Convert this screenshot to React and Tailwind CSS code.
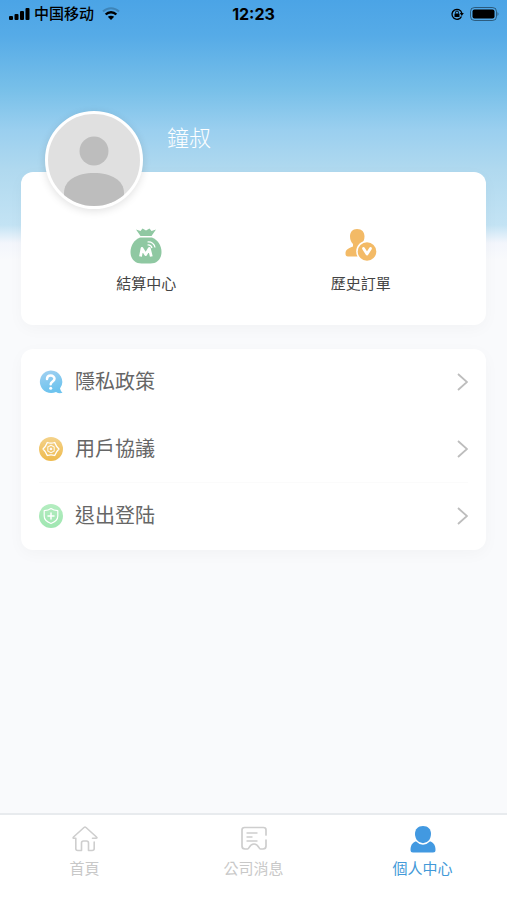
import React from "react";

const BagIcon = () => (
  <svg width="32" height="36" viewBox="0 0 32 36" aria-hidden="true">
    <path d="M6 1.500 L10.500 3 L12.500 0.500 L16 2.500 L19.500 0.500 L21.500 3 L26 1.500 L21.500 8 H10.500 Z" fill="#8fc8a2" />
    <path d="M10 9.500 H22 C27.500 12 31.500 17 31.500 24 C31.500 31.500 26.500 35.500 20.500 35.500 H11.500 C5.500 35.500 0.500 31.500 0.500 24 C0.500 17 4.500 12 10 9.500 Z" fill="#8fc8a2" />
    <path d="M10.500 28.500 L12 20.500 L15.700 26.500 L19.300 20.500 L21.300 28.500" fill="none" stroke="#fff" strokeWidth="2.800" strokeLinejoin="round" />
    <path d="M17.500 17 C19.500 16.700 21.500 18 22 20 M17.500 14 C21.500 13.500 24.500 16 25 19.500" fill="none" stroke="#fff" strokeWidth="1.200" />
  </svg>
);

const OrderIcon = () => (
  <svg width="34" height="36" viewBox="0 0 34 36" aria-hidden="true">
    <path d="M13 1 C18 1 20.500 4 20.500 8.500 C20.500 12 19 14.500 17.500 16 V19 L24 23 V28.500 H4 C2 28.500 1.500 27.500 1.500 25.500 C1.500 22 3.500 20.500 9 18.500 V16 C7.500 14.500 6 12 6 8.500 C6 4 8.500 1 13 1 Z" fill="#f3ba66" />
    <circle cx="23" cy="23.500" r="10.800" fill="#fff" />
    <circle cx="23" cy="23.500" r="9.300" fill="#f3ba66" />
    <path d="M19.500 20.500 L23 26 L26.500 20.500" fill="none" stroke="#fff" strokeWidth="2.800" strokeLinecap="round" strokeLinejoin="round" />
  </svg>
);

const QuestionIcon = () => (
  <svg width="24" height="24" viewBox="0 0 24 24" aria-hidden="true">
    <defs>
      <linearGradient id="blueFill" x1="0" y1="0" x2="0.300" y2="1">
        <stop offset="0" stopColor="#a3d1f1" />
        <stop offset="1" stopColor="#6dc3ee" />
      </linearGradient>
    </defs>
    <path d="M11.500 0.500 A11.300 11.300 0 1 0 17 22 C19 23.300 21 23.500 23.500 22.800 C22 21.500 21.500 20 21 18.500 A11.300 11.300 0 0 0 11.500 0.500 Z" fill="url(#blueFill)" />
    <path d="M8 9 C8 4.500 15.500 4.500 15.500 8.800 C15.500 11.500 11.700 11.500 11.700 14.300" fill="none" stroke="#fff" strokeWidth="2.500" strokeLinecap="round" />
    <circle cx="11.700" cy="18.200" r="1.500" fill="#fff" />
  </svg>
);

const GearIcon = () => (
  <svg width="24" height="24" viewBox="0 0 24 24" aria-hidden="true">
    <defs>
      <linearGradient id="goldFill" x1="0" y1="0" x2="0" y2="1">
        <stop offset="0" stopColor="#f4d28a" />
        <stop offset="1" stopColor="#eeba4d" />
      </linearGradient>
    </defs>
    <circle cx="12" cy="12" r="12" fill="url(#goldFill)" />
    <g fill="none" stroke="#fff" strokeLinejoin="round">
      <path d="M8.300 5.500 Q12 6.700 15.700 5.500 Q17.200 9.500 20 12 Q17.200 14.500 15.700 18.500 Q12 17.300 8.300 18.500 Q6.800 14.500 4 12 Q6.800 9.500 8.300 5.500 Z" strokeWidth="1.300" />
      <path d="M12 8.200 L15.200 10 V14 L12 15.800 L8.800 14 V10 Z" strokeWidth="1.100" opacity="0.850" />
      <circle cx="12" cy="12" r="0.900" fill="#fff" />
    </g>
  </svg>
);

const ShieldIcon = () => (
  <svg width="24" height="24" viewBox="0 0 24 24" aria-hidden="true">
    <defs>
      <linearGradient id="greenFill" x1="0" y1="0" x2="0" y2="1">
        <stop offset="0" stopColor="#b4edc0" />
        <stop offset="1" stopColor="#9fe6b1" />
      </linearGradient>
    </defs>
    <circle cx="12" cy="12" r="12" fill="url(#greenFill)" />
    <g fill="none" stroke="#fff" strokeLinecap="round" strokeLinejoin="round">
      <path d="M12 4.500 C14 6 16 6.500 18.800 6.700 V12 C18.800 15.500 16 18 12 19.500 C8 18 5.200 15.500 5.200 12 V6.700 C8 6.500 10 6 12 4.500 Z" strokeWidth="1.200" />
      <path d="M12 9 V15 M9 12 H15" strokeWidth="1.500" />
    </g>
  </svg>
);

const Chevron = () => (
  <svg width="12" height="20" viewBox="0 0 12 20" fill="none" stroke="#bdbdbd" strokeWidth="1.800" aria-hidden="true">
    <path d="M2 2 L11 10 L2 18" />
  </svg>
);

const HomeIcon = () => (
  <svg width="28" height="28" viewBox="0 0 28 28" fill="none" stroke="#cecece" strokeWidth="1.600" strokeLinecap="round" strokeLinejoin="round" aria-hidden="true">
    <path d="M21.500 13.300 H25 C26.200 13.300 26.200 12.600 25.500 12 L15 2.500 Q14 1.700 13 2.500 L2.500 12 C1.800 12.700 2 13.300 3 13.300 H4.800 V23.500 Q4.800 25.500 6.800 25.500 H10.500 V18 Q10.500 16 12.500 16 H15.500 Q17.500 16 17.500 18 V25.500 H21 Q23.200 25.500 23.200 23.500 V17" />
  </svg>
);

const NewsIcon = () => (
  <svg width="28" height="28" viewBox="0 0 28 28" fill="none" stroke="#cecece" strokeWidth="1.700" strokeLinecap="round" strokeLinejoin="round" aria-hidden="true">
    <path d="M26 10 V5 Q26 2.500 23.500 2.500 H4.500 Q2 2.500 2 5 V21 Q2 24 5 24 H7.500 C9.500 24 9 19 14 19 C19 19 18.500 24 20.500 24 H23 Q26 24 26 21 V15" />
    <path d="M7 8 H17 M7 12 H12 M7 16 H17" strokeWidth="1.400" />
  </svg>
);

const ProfileIcon = () => (
  <svg width="28" height="28" viewBox="0 0 28 28" aria-hidden="true">
    <path d="M7.500 16 L20.500 16 C25 17.500 26.500 21 26.500 25 Q26.500 27.500 24 27.500 H4 Q1.500 27.500 1.500 25 C1.500 21 3 17.500 7.500 16 Z" fill="#4299e1" />
    <path d="M14 1 C19 1 22 4 22 9 C22 14 18.500 18.500 14 18.500 C9.500 18.500 6 14 6 9 C6 4 9 1 14 1 Z" fill="#4299e1" />
    <path d="M7 15.500 Q14 22.500 21 15.500" fill="none" stroke="#fff" strokeWidth="1.300" />
  </svg>
);

const shortcuts = [
  { label: "結算中心", Icon: BagIcon },
  { label: "歷史訂單", Icon: OrderIcon },
];

const menu = [
  { label: "隱私政策", Icon: QuestionIcon, line: "border-transparent" },
  { label: "用戶協議", Icon: GearIcon, line: "border-[#fbfbfb]" },
  { label: "退出登陆", Icon: ShieldIcon, line: "border-transparent" },
];

const tabs = [
  { label: "首頁", Icon: HomeIcon, color: "text-[#c8c8c8]" },
  { label: "公司消息", Icon: NewsIcon, color: "text-[#c8c8c8]" },
  { label: "個人中心", Icon: ProfileIcon, color: "text-[#4299d8]", current: true },
];

function StatusBar() {
  return (
    <div className="grid h-7 grid-cols-3 items-center px-2 text-black">
      <div className="flex items-center gap-1">
        <svg width="22" height="14" viewBox="0 0 22 14" aria-hidden="true">
          <rect x="1" y="9" width="4" height="4" rx="1" />
          <rect x="6.500" y="7" width="4" height="6" rx="1" />
          <rect x="12" y="4" width="4" height="9" rx="1" />
          <rect x="17.500" y="1" width="4" height="12" rx="1" />
        </svg>
        <span className="text-[15px] font-medium leading-5">中国移动</span>
        <svg className="ml-1" width="18" height="14" viewBox="0 0 18 14" fill="none" stroke="#000" aria-hidden="true">
          <path d="M1 4.500 C5.500 0 12.500 0 17 4.500" strokeWidth="2" opacity="0.200" />
          <path d="M3.700 7.500 C6.500 4.500 11.500 4.500 14.300 7.500" strokeWidth="2.400" />
          <path d="M9 13 L5.800 9.800 Q9 7.500 12.200 9.800 Z" fill="#000" stroke="none" />
        </svg>
      </div>
      <time className="text-center font-['Inter','Liberation_Sans',sans-serif] text-base font-bold leading-5">12:23</time>
      <div className="flex items-center justify-end gap-1.5">
        <svg width="14" height="14" viewBox="0 0 14 14" aria-hidden="true">
          <path d="M11.500 9.500 A5 5 0 1 1 11.800 6" fill="none" stroke="#000" strokeWidth="1.300" />
          <path d="M9.800 6 H13.800 L11.800 9 Z" />
          <rect x="4.500" y="6.500" width="5" height="3.500" rx="0.500" />
          <path d="M5.500 6.500 V5.500 Q5.500 4 7 4 Q8.500 4 8.500 5.500 V6.500" fill="none" stroke="#000" />
        </svg>
        <svg width="29" height="14" viewBox="0 0 29 14" aria-hidden="true">
          <rect x="0.500" y="0.500" width="26" height="13" rx="4" fill="none" stroke="#000" opacity="0.450" />
          <rect x="2.500" y="2.500" width="22" height="9" rx="2" />
          <path d="M27.500 5 Q29.500 7 27.500 9 Z" opacity="0.450" />
        </svg>
      </div>
    </div>
  );
}

export default function App() {
  return (
    <div className="flex min-h-screen flex-col bg-[#f9fafc] font-['Liberation_Sans','Noto_Sans_CJK_TC',sans-serif]">
      <main className="flex-1 bg-[linear-gradient(180deg,#4ba4e6_0px,#56abe7_36px,#78c0e9_90px,#9acfef_130px,#b0d9ef_170px,#c3e3f4_225px,#f3f6fc_243px,#f9fafc_260px)]">
        <StatusBar />
        <div className="px-[21px] pt-[83px]">
          <header className="flex items-start gap-6 px-6">
            <div className="relative z-10 -mb-[37px] size-[98px] shrink-0 overflow-hidden rounded-full border-3 border-white bg-[#e0e0e0] shadow-[0_2px_8px_rgba(0,0,0,0.12)]">
              <svg className="size-full" viewBox="0 0 92 92" role="img" aria-label="鐘叔">
                <circle cx="46" cy="37" r="14.500" fill="#bdbdbd" />
                <path d="M16 94 V79 C16 66 29 59 46 59 C63 59 76 66 76 79 V94 Z" fill="#bdbdbd" />
              </svg>
            </div>
            <h1 className="pt-3.5 text-[22px] font-light leading-7 text-white">鐘叔</h1>
          </header>
          <section className="grid h-[153px] grid-cols-2 rounded-xl bg-white px-[18px] pt-14 shadow-[0_4px_16px_rgba(0,0,0,0.03)]">
            {shortcuts.map(({ label, Icon }) => (
              <div key={label} className="flex justify-center">
                <button type="button" className="flex flex-col items-center gap-2 self-start text-[15px] leading-6 text-[#444]">
                  <Icon />
                  {label}
                </button>
              </div>
            ))}
          </section>
          <ul className="mt-6 rounded-xl bg-white px-[18px] shadow-[0_4px_16px_rgba(0,0,0,0.03)]">
            {menu.map(({ label, Icon, line }) => (
              <li key={label} className={`border-b ${line}`}>
                <button type="button" className="flex h-[66px] w-full items-center gap-3 text-left text-[20px] leading-7 text-[#666]">
                  <Icon />
                  <span className="flex-1">{label}</span>
                  <Chevron />
                </button>
              </li>
            ))}
          </ul>
        </div>
      </main>
      <nav className="grid h-[87px] grid-cols-3 border-t-2 border-[#e8ebee] bg-white">
        {tabs.map(({ label, Icon, color, current }) => (
          <a key={label} href="#" aria-current={current ? "page" : undefined} className={`flex flex-col items-center gap-1 pt-2.5 text-[15px] leading-6 ${color}`}>
            <Icon />
            {label}
          </a>
        ))}
      </nav>
    </div>
  );
}
